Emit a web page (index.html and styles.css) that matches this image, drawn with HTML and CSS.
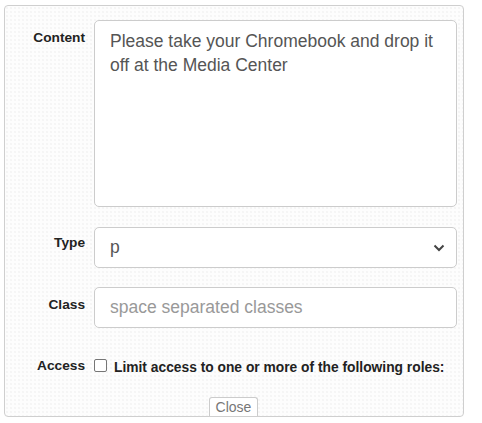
FILE: index.html
```html
<!DOCTYPE html>
<html>
<head>
<meta charset="utf-8">
<link rel="stylesheet" href="styles.css">
</head>
<body>
<div class="panel">
  <div class="row row-content">
    <label class="lbl">Content</label>
    <div class="field">
      <div class="textarea">Please take your Chromebook and drop it off at the Media Center</div>
    </div>
  </div>
  <div class="row row-type">
    <label class="lbl">Type</label>
    <div class="field">
      <div class="select"><span>p</span>
        <svg class="chev" width="12" height="8" viewBox="0 0 12 8"><path d="M1.5 1.5 L6 6 L10.5 1.5" fill="none" stroke="#444" stroke-width="2"/></svg>
      </div>
    </div>
  </div>
  <div class="row row-class">
    <label class="lbl">Class</label>
    <div class="field">
      <div class="input placeholder">space separated classes</div>
    </div>
  </div>
  <div class="row row-access">
    <label class="lbl">Access</label>
    <div class="field access">
      <span class="checkbox"></span>
      <span class="check-label">Limit access to one or more of the following roles:</span>
    </div>
  </div>
  <div class="footer">
    <span class="close-tab">Close</span>
  </div>
</div>
</body>
</html>
```
FILE: styles.css
```css
html, body {
  margin: 0;
  padding: 0;
  background: #fff;
}
body {
  padding: 5px 18px 0 4px;
  font-family: "Liberation Sans", Arial, sans-serif;
}
.panel {
  border: 1px solid #cfcfcf;
  border-radius: 4px;
  height: 412px;
  box-sizing: border-box;
  padding: 14px 6px 0 0;
  background-color: #fdfdfd;
  background-image: radial-gradient(circle, #ececec 0.6px, transparent 0.8px);
  background-size: 4px 4px;
  display: flex;
  flex-direction: column;
}
.row {
  display: flex;
  gap: 9px;
}
.lbl {
  width: 80px;
  flex: none;
  text-align: right;
  font-weight: bold;
  font-size: 13.7px;
  color: #222;
}
.field {
  flex: 1;
}
.row-content .lbl { padding-top: 10px; }
.textarea {
  height: 187px;
  box-sizing: border-box;
  border: 1px solid #ccc;
  border-radius: 5px;
  background: #fff;
  padding: 8px 15px;
  font-size: 17.5px;
  line-height: 24px;
  color: #555;
}
.row-type { margin-top: 20px; }
.row-type .lbl { padding-top: 8px; }
.select {
  height: 41px;
  box-sizing: border-box;
  border: 1px solid #ccc;
  border-radius: 5px;
  background: #fff;
  padding: 0 11px 0 15px;
  display: flex;
  align-items: center;
  justify-content: space-between;
  font-size: 17.5px;
  color: #555;
}
.row-class { margin-top: 19px; }
.row-class .lbl { padding-top: 10px; }
.input {
  height: 41px;
  box-sizing: border-box;
  border: 1px solid #ccc;
  border-radius: 5px;
  background: #fff;
  padding: 0 15px;
  display: flex;
  align-items: center;
  font-size: 17.5px;
}
.placeholder { color: #999; }
.row-access { margin-top: 30px; }
.row-access .lbl { padding-top: 0; }
.access {
  display: flex;
  align-items: flex-start;
  gap: 7px;
}
.checkbox {
  width: 13px;
  height: 13px;
  border: 1px solid #767676;
  border-radius: 2px;
  background: #fff;
  flex: none;
  box-sizing: border-box;
  margin-top: 1px;
}
.check-label {
  font-weight: bold;
  font-size: 13.8px;
  color: #222;
  padding-top: 2px;
}
.footer {
  margin-top: auto;
  display: flex;
  justify-content: center;
}
.close-tab {
  border: 1px solid #ccc;
  border-bottom: none;
  border-radius: 3px 3px 0 0;
  background: #fff;
  color: #777;
  font-size: 14px;
  padding: 1px 6px 1px 6px;
  line-height: 16px;
  margin-left: 5px;
}
```
